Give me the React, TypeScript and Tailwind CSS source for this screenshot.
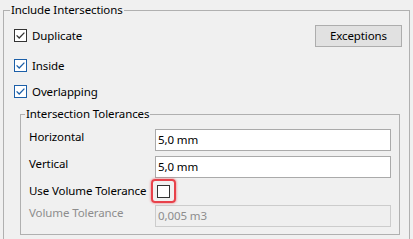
import React from 'react';

const CheckBox = ({ checked, tone = 'dark' }: { checked?: boolean; tone?: 'dark' | 'blue' }) => {
  const c = tone === 'blue' ? '#1c5fa8' : '#333333';
  return (
    <svg width="13" height="13" viewBox="0 0 13 13" className="shrink-0 block">
      <rect x="0.5" y="0.5" width="12" height="12" fill="#ffffff" stroke={c} />
      {checked && <path d="M2.6 6.4 L5.2 9 L10.4 3.6" fill="none" stroke={c} strokeWidth="1.3" />}
    </svg>
  );
};

const CheckRow = ({ label, tone, className = '' }: { label: string; tone?: 'dark' | 'blue'; className?: string }) => (
  <div className={`flex items-center h-[13px] ${className}`}>
    <CheckBox checked tone={tone} />
    <span className="ml-[5px] leading-[16px]">{label}</span>
  </div>
);

const Field = ({ label, value, disabled, className = '' }: { label: string; value: string; disabled?: boolean; className?: string }) => (
  <div className={`flex items-start h-[22px] ${className}`}>
    <span className={`w-[126px] leading-[16px] ${disabled ? 'text-[#8d8d8d]' : ''}`}>{label}</span>
    <div
      className={`w-[236px] h-[22px] border flex items-center pl-[2px] leading-[16px] ${
        disabled ? 'bg-[#efefef] border-[#cccccc] text-[#8d8d8d]' : 'bg-white border-[#aaaaaa]'
      }`}
    >
      {value}
    </div>
  </div>
);

export default function App() {
  return (
    <div className="w-[413px] h-[239px] overflow-hidden bg-[#f0f0f0] text-[11.5px] tracking-[-0.1px] text-black font-['Noto_Sans',sans-serif]">
      {/* Include Intersections */}
      <fieldset className="ml-[3px] mt-[2px] w-[407px] h-[260px] border border-[#b0b0b0] p-0 m-0 min-w-0">
        <legend className="ml-[6px] px-[1px] leading-[16px]">Include Intersections</legend>

        <div className="flex items-start mt-[7px] pl-[10px] pr-[7px]">
          <CheckRow label="Duplicate" className="mt-[4px]" />
          <button className="ml-auto w-[87px] h-[22px] bg-[#e1e1e1] border border-[#adadad] leading-[16px]">
            Exceptions
          </button>
        </div>
        <CheckRow label="Inside" tone="blue" className="mt-[12px] ml-[10px]" />
        <CheckRow label="Overlapping" tone="blue" className="mt-[13px] ml-[10px]" />

        {/* Intersection Tolerances */}
        <fieldset className="ml-[16px] mt-[8px] w-[380px] h-[129px] border border-[#b0b0b0] p-0 min-w-0">
          <legend className="ml-[4px] px-[1px] leading-[16px]">Intersection Tolerances</legend>
          <div className="pl-[8px]">
            <Field label="Horizontal" value="5,0 mm" className="mt-[7px]" />
            <Field label="Vertical" value="5,0 mm" className="mt-[5px]" />
            <div className="flex items-center h-[22px] mt-[2px]">
              <span className="w-[126px] leading-[16px]">Use Volume Tolerance</span>
              <div className="relative ml-[2px]">
                <CheckBox />
                <div className="absolute -left-[6px] -top-[6px] w-[25px] h-[24px] rounded-[4px] border-2 border-[#e8414a] shadow-[0_0_2px_1px_rgba(232,65,74,0.35)]" />
              </div>
            </div>
            <Field label="Volume Tolerance" value="0,005 m3" disabled className="mt-[3px]" />
          </div>
        </fieldset>
      </fieldset>
    </div>
  );
}
